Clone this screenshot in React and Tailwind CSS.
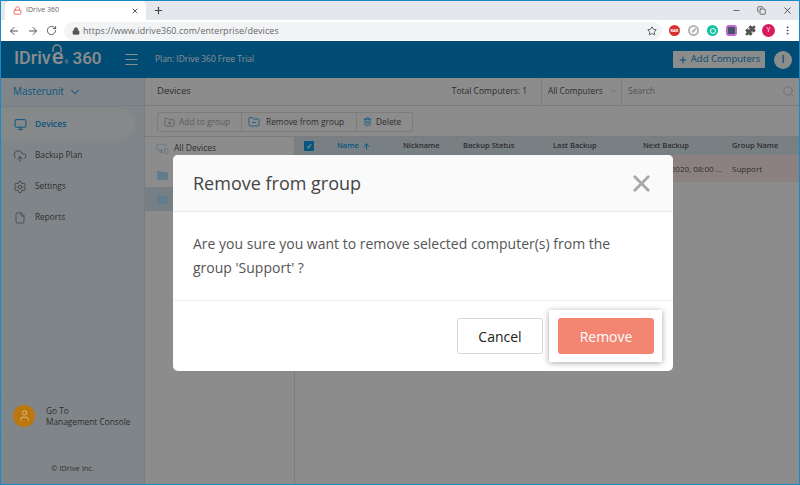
import { ArrowLeft, ArrowRight, ArrowUp, ChevronDown, CloudUpload, Copy, File, FolderMinus, FolderPlus, Lock, Menu, Minus, Monitor, MonitorSmartphone, MoreVertical, Plus, Puzzle, RotateCw, Search, Settings, Star, Trash2, User, X } from "lucide-react";

const FONT = "font-['Open_Sans','Liberation_Sans',sans-serif]";

function Folder({ className }) {
    return (
        <svg viewBox="0 0 12 11" className={className} fill="#b4e2ff">
            <path d="M0 2a1 1 0 0 1 1-1h3l1 1.2h6a1 1 0 0 1 1 1V10a1 1 0 0 1-1 1H1a1 1 0 0 1-1-1z" />
        </svg>
    );
}

function Browser() {
    return (
        <div className="shrink-0">
            <div className="flex h-[19px] bg-[#e4e7eb] pl-[4px]">
                <div className="flex h-[19px] w-[141px] items-center rounded-t-[5px] bg-white pl-[8px] pr-[7px]">
                    <Lock size={9} className="text-[#ee6a5c]" strokeWidth={2.5} />
                    <span className="ml-[4px] flex-1 text-[7px] text-[#666]">IDrive 360</span>
                    <X size={8} className="text-[#444]" strokeWidth={2.5} />
                </div>
                <Plus size={11} strokeWidth={2.5} className="ml-[7px] mt-[4px] text-[#444]" />
                <div className="ml-auto flex items-center gap-[16px] pr-[6px] text-[#444]">
                    <Minus size={9} />
                    <Copy size={9} />
                    <X size={11} />
                </div>
            </div>
            <div className="flex h-[21px] items-center bg-white pl-[7px] pr-[6px]">
                <ArrowLeft size={12} className="shrink-0 text-[#555]" />
                <ArrowRight size={12} className="ml-[7px] shrink-0 text-[#555]" />
                <RotateCw size={11} className="ml-[7px] shrink-0 text-[#555]" />
                <div className="ml-[7px] flex h-[18px] w-[598px] shrink-0 items-center rounded-full bg-[#f1f3f4] pl-[8px] pr-[5px]">
                    <Lock size={8} className="text-[#555]" fill="#555" />
                    <span className="ml-[3px] flex-1 text-[8.9px] tracking-[0.1px] text-[#666]">https://www.idrive360.com/enterprise/devices</span>
                    <Star size={10} className="text-[#444]" />
                </div>
                <div className="ml-[7px] flex items-center gap-[8px]">
                    <span className="flex h-[11px] w-[11px] items-center justify-center rounded-full bg-[#d9332f] text-[4px] font-bold text-white">RAR</span>
                    <span className="flex h-[11px] w-[11px] items-center justify-center rounded-full border-2 border-[#b5b5b5]">
                        <span className="h-[5px] w-[2px] rotate-45 bg-[#b5b5b5]" />
                    </span>
                    <span className="flex h-[11px] w-[11px] items-center justify-center rounded-full bg-[#10c2a0]">
                        <span className="h-[6px] w-[6px] rounded-full border border-white" />
                    </span>
                    <span className="h-[11px] w-[11px] rounded-[3px] border-2 border-[#c06ad0] bg-[#456]" />
                    <Puzzle size={11} className="text-[#555]" fill="#555" />
                </div>
                <span className="ml-[6px] flex h-[13px] w-[13px] shrink-0 items-center justify-center rounded-full bg-[#d81b60] text-[7px] text-white">Y</span>
                <MoreVertical size={11} className="ml-[7px] shrink-0 text-[#444]" />
            </div>
        </div>
    );
}

function Header() {
    return (
        <div className="flex h-[37px] shrink-0 items-center bg-[#008bd6] pl-[13px] pr-[7px] text-white">
            <div className="relative flex w-[88px] items-baseline font-['Roboto',sans-serif] font-medium leading-none">
                <span className="text-[18px]">IDriv</span>
                <span className="ml-[1px] text-[22px]">e</span>
                <svg viewBox="0 0 12 8" className="absolute left-[37px] top-[-2px] h-[8px] w-[12px]" fill="none" stroke="white" strokeWidth="1.5">
                    <path d="M2 8V5a4 4 0 0 1 8 0v3" />
                </svg>
                <span className="mb-[8px] ml-[1px] text-[5px]">®</span>
                <span className="ml-[4px] text-[17px]">360</span>
            </div>
            <Menu size={17} className="ml-[21px]" strokeWidth={1.6} />
            <span className="ml-[15px] text-[8.4px] font-normal">Plan: IDrive 360 Free Trial</span>
            <div className="ml-auto flex h-[17px] w-[92px] items-center justify-center rounded-[1px] bg-white text-[9.5px] text-[#008bd6]">
                <Plus size={10} strokeWidth={2.5} />
                <span className="ml-[3px]">Add Computers</span>
            </div>
            <span className="ml-[9px] flex h-[18px] w-[18px] items-center justify-center rounded-full bg-white text-[10px] font-semibold text-[#008bd6]">I</span>
        </div>
    );
}

const NAV = [
    { icon: CloudUpload, label: "Backup Plan", size: 14 },
    { icon: Settings, label: "Settings", size: 14 },
    { icon: File, label: "Reports", size: 12 },
];

function Sidebar() {
    return (
        <div className="flex w-[144px] shrink-0 flex-col border-r border-[#d5e6ee] bg-[#eaf3f9]">
            <div className="flex h-[28px] shrink-0 items-center border-b border-[#d5e6ee] pl-[12px] text-[10px] text-[#0f9ce8]">
                Masterunit
                <ChevronDown size={14} className="ml-[4px]" strokeWidth={1.8} />
            </div>
            <div className="mt-[2px] flex h-[32px] w-[134px] items-center rounded-r-[16px] bg-[#f5f9fb] pl-[13px] text-[8.5px] font-semibold text-[#0f9ce8]">
                <Monitor size={13} strokeWidth={1.8} />
                <span className="ml-[8px]">Devices</span>
            </div>
            <div className="flex flex-col">
                {NAV.map((item) => (
                    <div key={item.label} className="flex h-[31px] items-center pl-[12px] text-[8.3px] text-[#555]">
                        <span className="flex w-[14px] justify-center">
                            <item.icon size={item.size} strokeWidth={1.2} />
                        </span>
                        <span className="ml-[8px]">{item.label}</span>
                    </div>
                ))}
            </div>
            <div className="mx-[6px] mt-auto flex h-[40px] items-center border-y border-[#e0edf3] pl-[6px] text-[8.3px] leading-[11px] text-[#555]">
                <span className="relative z-10 flex h-[22px] w-[22px] shrink-0 items-center justify-center rounded-full bg-[#b9770c] text-[#e0c9a0]">
                    <User size={13} strokeWidth={1.5} />
                </span>
                <span className="ml-[11px] flex flex-col whitespace-nowrap">
                    <span>Go To</span>
                    <span>Management Console</span>
                </span>
            </div>
            <div className="mb-[10px] mt-[27px] text-center text-[7.5px] text-[#555]">© IDrive Inc.</div>
        </div>
    );
}

const COLUMNS = [
    { label: "Nickname", w: "w-[60px]" },
    { label: "Backup Status", w: "w-[90px]" },
    { label: "Last Backup", w: "w-[90px]" },
    { label: "Next Backup", w: "w-[89px]" },
    { label: "Group Name", w: "w-[60px]" },
];

function Main() {
    return (
        <div className="flex min-w-0 flex-1 flex-col bg-white text-[#555]">
            <div className="flex h-[28px] shrink-0 items-center border-b border-[#e2e2e2] pl-[12px]">
                <span className="flex-1 text-[9.5px]">Devices</span>
                <span className="text-[8.5px]">Total Computers: 1</span>
                <div className="ml-[14px] flex h-full w-[81px] shrink-0 items-center border-x border-[#e2e2e2] pl-[6px] text-[8.3px]">
                    All Computers
                    <ChevronDown size={7} className="ml-[7px] text-[#999]" />
                </div>
                <div className="flex h-full w-[177px] shrink-0 items-center justify-between pl-[6px] pr-[4px] text-[8.5px] text-[#999]">
                    Search
                    <Search size={13} strokeWidth={1.3} className="text-[#bbb]" />
                </div>
            </div>
            <div className="ml-[12px] mt-[6px] flex h-[20px] w-[256px] shrink-0 items-center rounded-[2px] border border-[#e2e2e2] text-[8.4px]">
                <div className="flex h-full w-[84px] items-center border-r border-[#e2e2e2] pl-[6px] text-[#aaa]">
                    <FolderPlus size={11} strokeWidth={1.3} className="text-[#888]" />
                    <span className="ml-[4px]">Add to group</span>
                </div>
                <div className="flex h-full w-[115px] items-center border-r border-[#e2e2e2] pl-[6px]">
                    <FolderMinus size={12} strokeWidth={1.6} className="text-[#0f9ce8]" />
                    <span className="ml-[6px]">Remove from group</span>
                </div>
                <div className="flex items-center pl-[6px]">
                    <Trash2 size={9} className="text-[#0f9ce8]" />
                    <span className="ml-[4px]">Delete</span>
                </div>
            </div>
            <div className="mt-[4px] flex min-h-0 flex-1 border-t border-[#e2e2e2]">
                <div className="w-[150px] shrink-0 border-r border-[#e2e2e2] text-[8.5px]">
                    <div className="flex h-[23px] items-center pl-[11px]">
                        <MonitorSmartphone size={13} strokeWidth={1} className="text-[#7cc4ee]" />
                        <span className="ml-[5px]">All Devices</span>
                    </div>
                    <div className="flex h-[27px] items-center pl-[12px] pt-[3px]">
                        <Folder className="h-[10px] w-[11px]" />
                    </div>
                    <div className="flex h-[24px] items-center bg-[#d8e8f2] pl-[12px]">
                        <Folder className="h-[10px] w-[11px]" />
                    </div>
                </div>
                <div className="min-w-0 flex-1">
                    <div className="flex h-[18px] items-center bg-[#dce9f0] text-[7.5px] font-semibold">
                        <span className="ml-[9px] flex h-[10px] w-[10px] items-center justify-center rounded-[1px] bg-[#0f9ce8] text-[8px] leading-none text-white">✓</span>
                        <span className="ml-[23px] flex w-[66px] items-center text-[#0f9ce8]">
                            Name
                            <ArrowUp size={9} strokeWidth={2.5} className="ml-[3px]" />
                        </span>
                        {COLUMNS.map((col) => (
                            <span key={col.label} className={`${col.w} shrink-0`}>{col.label}</span>
                        ))}
                    </div>
                    <div className="flex h-[27px] items-center justify-end bg-[#ffeceb] pr-[21px] text-[8px]">
                        <span className="w-[74px] text-right">2020, 08:00 ...</span>
                        <span className="ml-[10px] w-[46px]">Support</span>
                    </div>
                </div>
            </div>
        </div>
    );
}

function Modal() {
    return (
        <div className="absolute inset-0 bg-black/45">
            <div className="absolute left-[172px] top-[114px] h-[216px] w-[500px] rounded-[5px] bg-white">
                <div className="flex h-[57px] items-center justify-between rounded-t-[5px] border-b border-[#e8e8e8] bg-[#fafafa] pl-[20px] pr-[18px]">
                    <span className="text-[18px] text-[#444]">Remove from group</span>
                    <X size={27} strokeWidth={2.5} className="text-[#a8a8a8]" />
                </div>
                <div className="h-[89px] border-b border-[#eee] px-[20px] pt-[20px] text-[14px] leading-[24px] text-[#555]">
                    Are you sure you want to remove selected computer(s) from the
                    <br />
                    group 'Support' ?
                </div>
                <div className="flex items-start justify-end pr-[11px] pt-[9px]">
                    <div className="mt-[8px] flex h-[36px] w-[86px] items-center justify-center rounded-[3px] border border-[#d8d8d8] text-[14px] text-[#222]">Cancel</div>
                    <div className="ml-[6px] bg-white py-[8px] pl-[9px] pr-[8px] shadow-[0_1px_6px_rgba(0,0,0,0.35)]">
                        <div className="flex h-[36px] w-[96px] items-center justify-center rounded-[3px] bg-[#f28672] text-[14px] font-medium text-white">Remove</div>
                    </div>
                </div>
            </div>
        </div>
    );
}

export default function App() {
    return (
        <div className={`flex h-[485px] w-[800px] flex-col overflow-hidden border border-[#1a8ac6] ${FONT}`}>
            <Browser />
            <div className="relative flex min-h-0 flex-1 flex-col">
                <Header />
                <div className="flex min-h-0 flex-1">
                    <Sidebar />
                    <Main />
                </div>
                <Modal />
            </div>
        </div>
    );
}
